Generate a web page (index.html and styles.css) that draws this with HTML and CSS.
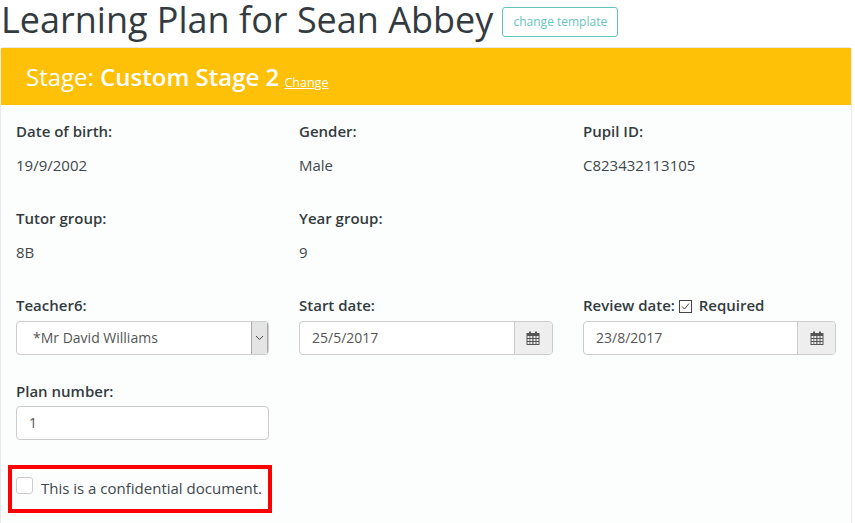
FILE: index.html
```html
<!DOCTYPE html>
<html lang="en">
<head>
<meta charset="utf-8">
<title>Learning Plan</title>
<link rel="stylesheet" href="styles.css">
</head>
<body>
<header class="page-head">
  <h1 class="title">Learning Plan for Sean Abbey</h1>
  <a class="btn-template">change template</a>
</header>
<section class="panel">
  <div class="stage">
    <span class="stage-label">Stage:</span> <strong class="stage-name">Custom Stage 2</strong> <a class="stage-link">Change</a>
  </div>
  <div class="body">
    <div class="row info">
      <div class="cell"><div class="label">Date of birth:</div><div class="value">19/9/2002</div></div>
      <div class="cell"><div class="label">Gender:</div><div class="value">Male</div></div>
      <div class="cell"><div class="label">Pupil ID:</div><div class="value">C823432113105</div></div>
    </div>
    <div class="row info">
      <div class="cell"><div class="label">Tutor group:</div><div class="value">8B</div></div>
      <div class="cell"><div class="label">Year group:</div><div class="value">9</div></div>
      <div class="cell"></div>
    </div>
    <div class="row fields">
      <div class="cell">
        <div class="label">Teacher6:</div>
        <div class="control select">
          <span class="select-text">*Mr David Williams</span>
          <span class="select-arrow"><svg width="9" height="6" viewBox="0 0 9 6"><path d="M1 1l3.5 3.5L8 1" fill="none" stroke="#444" stroke-width="1"/></svg></span>
        </div>
      </div>
      <div class="cell">
        <div class="label">Start date:</div>
        <div class="control date wide">
          <span class="date-text">25/5/2017</span>
          <span class="addon"><svg class="cal" width="14" height="14" viewBox="0 0 14 14"><path d="M3 0.5h2v2.5h-2zM9 0.5h2v2.5h-2z" fill="#555"/><path fill-rule="evenodd" d="M0.5 2h13v12h-13zM1.5 5v2h2v-2zM4.3 5v2h2v-2zM7.5 5v2h2v-2zM10.5 5v2h2v-2zM1.5 8v2h2v-2zM4.3 8v2h2v-2zM7.5 8v2h2v-2zM10.5 8v2h2v-2zM1.5 11v2h2v-2zM4.3 11v2h2v-2zM7.5 11v2h2v-2zM10.5 11v2h2v-2z" fill="#555"/></svg></span>
        </div>
      </div>
      <div class="cell">
        <div class="label">Review date: <span class="tick"><svg width="13" height="13" viewBox="0 0 13 13"><rect x="0.5" y="0.5" width="12" height="12" fill="#fff" stroke="#444"/><path d="M3 6.5l2.5 2.5L10 3.5" fill="none" stroke="#444" stroke-width="1"/></svg></span> Required</div>
        <div class="control date">
          <span class="date-text">23/8/2017</span>
          <span class="addon"><svg class="cal" width="14" height="14" viewBox="0 0 14 14"><path d="M3 0.5h2v2.5h-2zM9 0.5h2v2.5h-2z" fill="#555"/><path fill-rule="evenodd" d="M0.5 2h13v12h-13zM1.5 5v2h2v-2zM4.3 5v2h2v-2zM7.5 5v2h2v-2zM10.5 5v2h2v-2zM1.5 8v2h2v-2zM4.3 8v2h2v-2zM7.5 8v2h2v-2zM10.5 8v2h2v-2zM1.5 11v2h2v-2zM4.3 11v2h2v-2zM7.5 11v2h2v-2zM10.5 11v2h2v-2z" fill="#555"/></svg></span>
        </div>
      </div>
    </div>
    <div class="row fields plan">
      <div class="cell">
        <div class="label">Plan number:</div>
        <div class="control text">1</div>
      </div>
    </div>
    <div class="confidential">
      <span class="box"></span>
      <span class="conf-text">This is a confidential document.</span>
    </div>
  </div>
</section>
</body>
</html>
```

FILE: styles.css
```css
* { box-sizing: border-box; }
html, body { margin: 0; padding: 0; }
body {
  width: 855px;
  height: 523px;
  overflow: hidden;
  background: #fff;
  color: #333b40;
  font-family: "Open Sans", sans-serif;
  font-size: 15px;
}
.page-head {
  height: 47px;
  display: flex;
  align-items: flex-start;
  padding-left: 1px;
}
.title {
  margin: 0;
  font-size: 36px;
  line-height: 40px;
  font-weight: 400;
  color: #333b40;
  white-space: nowrap;
}
.btn-template {
  margin: 7px 0 0 9px;
  width: 116px;
  height: 30px;
  border: 1px solid #5fc3ba;
  border-radius: 3px;
  color: #66c5bd;
  font-size: 12px;
  line-height: 28px;
  text-align: center;
}
.panel {
  width: 852px;
  height: 476px;
  background: #fcfefd;
  border: 1px solid #e7e9ee;
  border-bottom: 0;
  border-radius: 4px 4px 0 0;
}
.stage {
  height: 57px;
  background: #ffc107;
  color: #fff;
  padding: 11px 0 0 25px;
  font-size: 24px;
  line-height: 36px;
  white-space: nowrap;
}
.stage-name { font-weight: 600; }
.stage-link {
  margin-left: -1px;
  font-size: 12.5px;
  text-decoration: underline;
  vertical-align: -1px;
}
.body { padding: 1px 15px 0; }
.row { display: grid; grid-template-columns: 283px 284px 253px; }
.info { height: 87px; padding-top: 15px; }
.label {
  font-weight: 600;
  line-height: 20px;
  white-space: nowrap;
  color: #333b40;
}
.value { margin-top: 14px; line-height: 20px; color: #40474c; }
.fields { height: 85px; padding-top: 15px; }
.fields .label { margin-bottom: 6px; }
.tick { display: inline-block; vertical-align: -2px; margin: 0 3px 0 0; height: 13px; }
.tick svg { display: block; }
.control {
  width: 253px;
  height: 34px;
  background: #fff;
  border: 1px solid #ccc;
  border-radius: 4px;
  display: flex;
  align-items: center;
  color: #555;
  line-height: 20px;
  font-size: 14px;
}
.wide { width: 254px; }
.select { padding-left: 16px; overflow: hidden; justify-content: space-between; }
.select-arrow {
  width: 17px;
  height: 32px;
  background: #e4e4e4;
  border-left: 1px solid #aaa;
  border-right: 1px solid #aaa;
  display: flex;
  align-items: center;
  justify-content: center;
}
.date { padding-left: 12px; justify-content: space-between; overflow: hidden; }
.addon {
  width: 38px;
  height: 32px;
  background: #eee;
  border-left: 1px solid #ccc;
  display: flex;
  align-items: center;
  justify-content: center;
}
.wide .addon { padding-right: 2px; }
.text { padding-left: 12px; }
.plan { height: 100px; padding-top: 16px; }
.plan .label { margin-bottom: 5px; }
.confidential {
  width: 264px;
  height: 48px;
  margin-left: -8px;
  border: 4px solid #f00;
  display: flex;
  align-items: flex-start;
  padding: 8px 0 0 4px;
}
.box {
  width: 17px;
  height: 17px;
  background: #fff;
  border: 1px solid #ccc;
  border-radius: 3px;
  flex: none;
}
.conf-text { margin: 1px 0 0 8px; line-height: 20px; color: #40474c; white-space: nowrap; }
```
